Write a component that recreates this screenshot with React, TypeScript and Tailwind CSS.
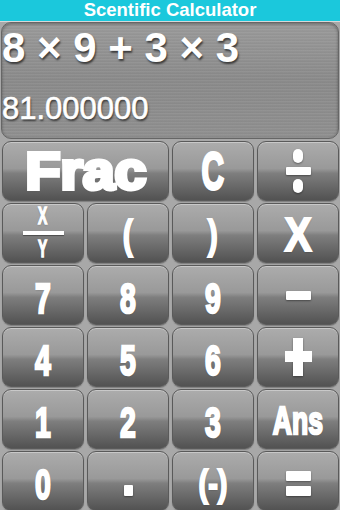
import React from "react";

const btn =
  "relative flex items-center justify-center rounded-[9px] border border-[#5a5a5a] bg-[linear-gradient(to_bottom,#acacac_0%,#999999_46%,#7e7e7e_54%,#525252_100%)] shadow-[inset_0_1px_0_rgba(255,255,255,0.35),0_1px_1px_rgba(0,0,0,0.25)]";

const lbl =
  "inline-block text-white font-bold [font-family:'Liberation_Sans',Arial,sans-serif] [text-shadow:0_1px_2px_rgba(0,0,0,0.45)]";

const dig = `${lbl} text-[43px] leading-[40px] scale-x-[0.66] pt-[6px] [-webkit-text-stroke:2.5px_white]`;

function Bar({ w, h, r = "rounded-[1px]" }: { w: string; h: string; r?: string }) {
  return <div className={`${w} ${h} ${r} bg-white shadow-[0_1px_2px_rgba(0,0,0,0.4)]`} />;
}

export default function App() {
  return (
    <div className="w-[340px] h-[510px] overflow-hidden bg-[#a8a8a8] flex flex-col [font-family:'Liberation_Sans',Arial,sans-serif]">
      <div className="h-[22px] shrink-0 bg-[#1bc8dc] flex items-center justify-center text-white font-bold text-[18.5px] leading-none border-b border-[#d8d8d8]">
        Scentific Calculator
      </div>
      <div className="h-[117px] shrink-0 mx-[1px] rounded-[10px] border border-[#666] bg-[repeating-linear-gradient(to_bottom,rgba(255,255,255,0.05)_0px,rgba(255,255,255,0.05)_1px,rgba(0,0,0,0.04)_2px,rgba(0,0,0,0)_3px),linear-gradient(to_bottom,#9a9a9a,#8a8a8a_50%,#8f8f8f)] shadow-[inset_0_1px_3px_rgba(0,0,0,0.35)] pt-[4px] flex flex-col">
        <div className="text-white font-bold text-[42px] leading-none whitespace-nowrap [text-shadow:1px_2px_2px_rgba(0,0,0,0.6)]">
          8 × 9 + 3 × 3
        </div>
        <div className="mt-[24px] text-white text-[31px] leading-none whitespace-nowrap [-webkit-text-stroke:0.6px_white] [text-shadow:1px_2px_2px_rgba(0,0,0,0.6)]">
          81.000000
        </div>
      </div>
      <div className="mt-[2px] grid grid-cols-4 grid-rows-[repeat(6,60px)] gap-x-[3px] gap-y-[2px] pl-[2px] pr-[1px]">
        <div className={`${btn} col-span-2`}>
          <span className={`${lbl} text-[51px] leading-[46px] scale-x-[1.12] pt-[2px] [-webkit-text-stroke:4px_white]`}>Frac</span>
        </div>
        <div className={btn}>
          <span className={`${lbl} text-[52px] leading-[52px] scale-x-[0.6] [-webkit-text-stroke:3px_white]`}>C</span>
        </div>
        <div className={btn}>
          <div className="flex flex-col items-center gap-[4px]">
            <div className="w-[10px] h-[14px] rounded-full bg-white shadow-[0_1px_2px_rgba(0,0,0,0.4)]" />
            <Bar w="w-[25px]" h="h-[8px]" />
            <div className="w-[10px] h-[14px] rounded-full bg-white shadow-[0_1px_2px_rgba(0,0,0,0.4)]" />
          </div>
        </div>

        <div className={btn}>
          <div className="flex flex-col items-center">
            <span className={`${lbl} text-[23px] leading-none scale-x-[0.6] [-webkit-text-stroke:1.5px_white]`}>X</span>
            <div className="w-[41px] h-[4px] bg-white my-[3px] shadow-[0_1px_1px_rgba(0,0,0,0.4)]" />
            <span className={`${lbl} text-[23px] leading-none scale-x-[0.6] [-webkit-text-stroke:1.5px_white]`}>Y</span>
          </div>
        </div>
        <div className={btn}>
          <span className={`${lbl} text-[40px] leading-[42px] scale-x-[0.75] pt-[4px] [-webkit-text-stroke:2px_white]`}>(</span>
        </div>
        <div className={btn}>
          <span className={`${lbl} text-[40px] leading-[42px] scale-x-[0.75] pt-[4px] [-webkit-text-stroke:2px_white]`}>)</span>
        </div>
        <div className={btn}>
          <span className={`${lbl} text-[48px] leading-[44px] scale-x-[0.85] pt-[3px] [-webkit-text-stroke:2px_white]`}>X</span>
        </div>

        {["7", "8", "9"].map((d) => (
          <div key={d} className={btn}>
            <span className={dig}>{d}</span>
          </div>
        ))}
        <div className={btn}>
          <Bar w="w-[25px]" h="h-[9px]" />
        </div>

        {["4", "5", "6"].map((d) => (
          <div key={d} className={btn}>
            <span className={dig}>{d}</span>
          </div>
        ))}
        <div className={btn}>
          <div className="relative w-[27px] h-[38px]">
            <div className="absolute left-[8px] top-0 w-[10px] h-[38px] bg-white shadow-[0_1px_2px_rgba(0,0,0,0.4)]" />
            <div className="absolute left-0 top-[13px] w-[27px] h-[11px] bg-white" />
          </div>
        </div>

        {["1", "2", "3"].map((d) => (
          <div key={d} className={btn}>
            <span className={dig}>{d}</span>
          </div>
        ))}
        <div className={btn}>
          <span className={`${lbl} text-[39px] leading-[38px] scale-x-[0.68] pt-[4px] [-webkit-text-stroke:2.5px_white]`}>Ans</span>
        </div>

        <div className={btn}>
          <span className={dig}>0</span>
        </div>
        <div className={btn}>
          <div className="mt-[18px] w-[9px] h-[11px] rounded-[1px] bg-white shadow-[0_1px_2px_rgba(0,0,0,0.4)]" />
        </div>
        <div className={btn}>
          <span className={`${lbl} text-[36px] leading-[38px] scale-x-[0.8] pt-[6px] [-webkit-text-stroke:2px_white]`}>(-)</span>
        </div>
        <div className={btn}>
          <div className="flex flex-col gap-[5px] pt-[4px]">
            <Bar w="w-[25px]" h="h-[10px]" />
            <Bar w="w-[25px]" h="h-[10px]" />
          </div>
        </div>
      </div>
    </div>
  );
}
